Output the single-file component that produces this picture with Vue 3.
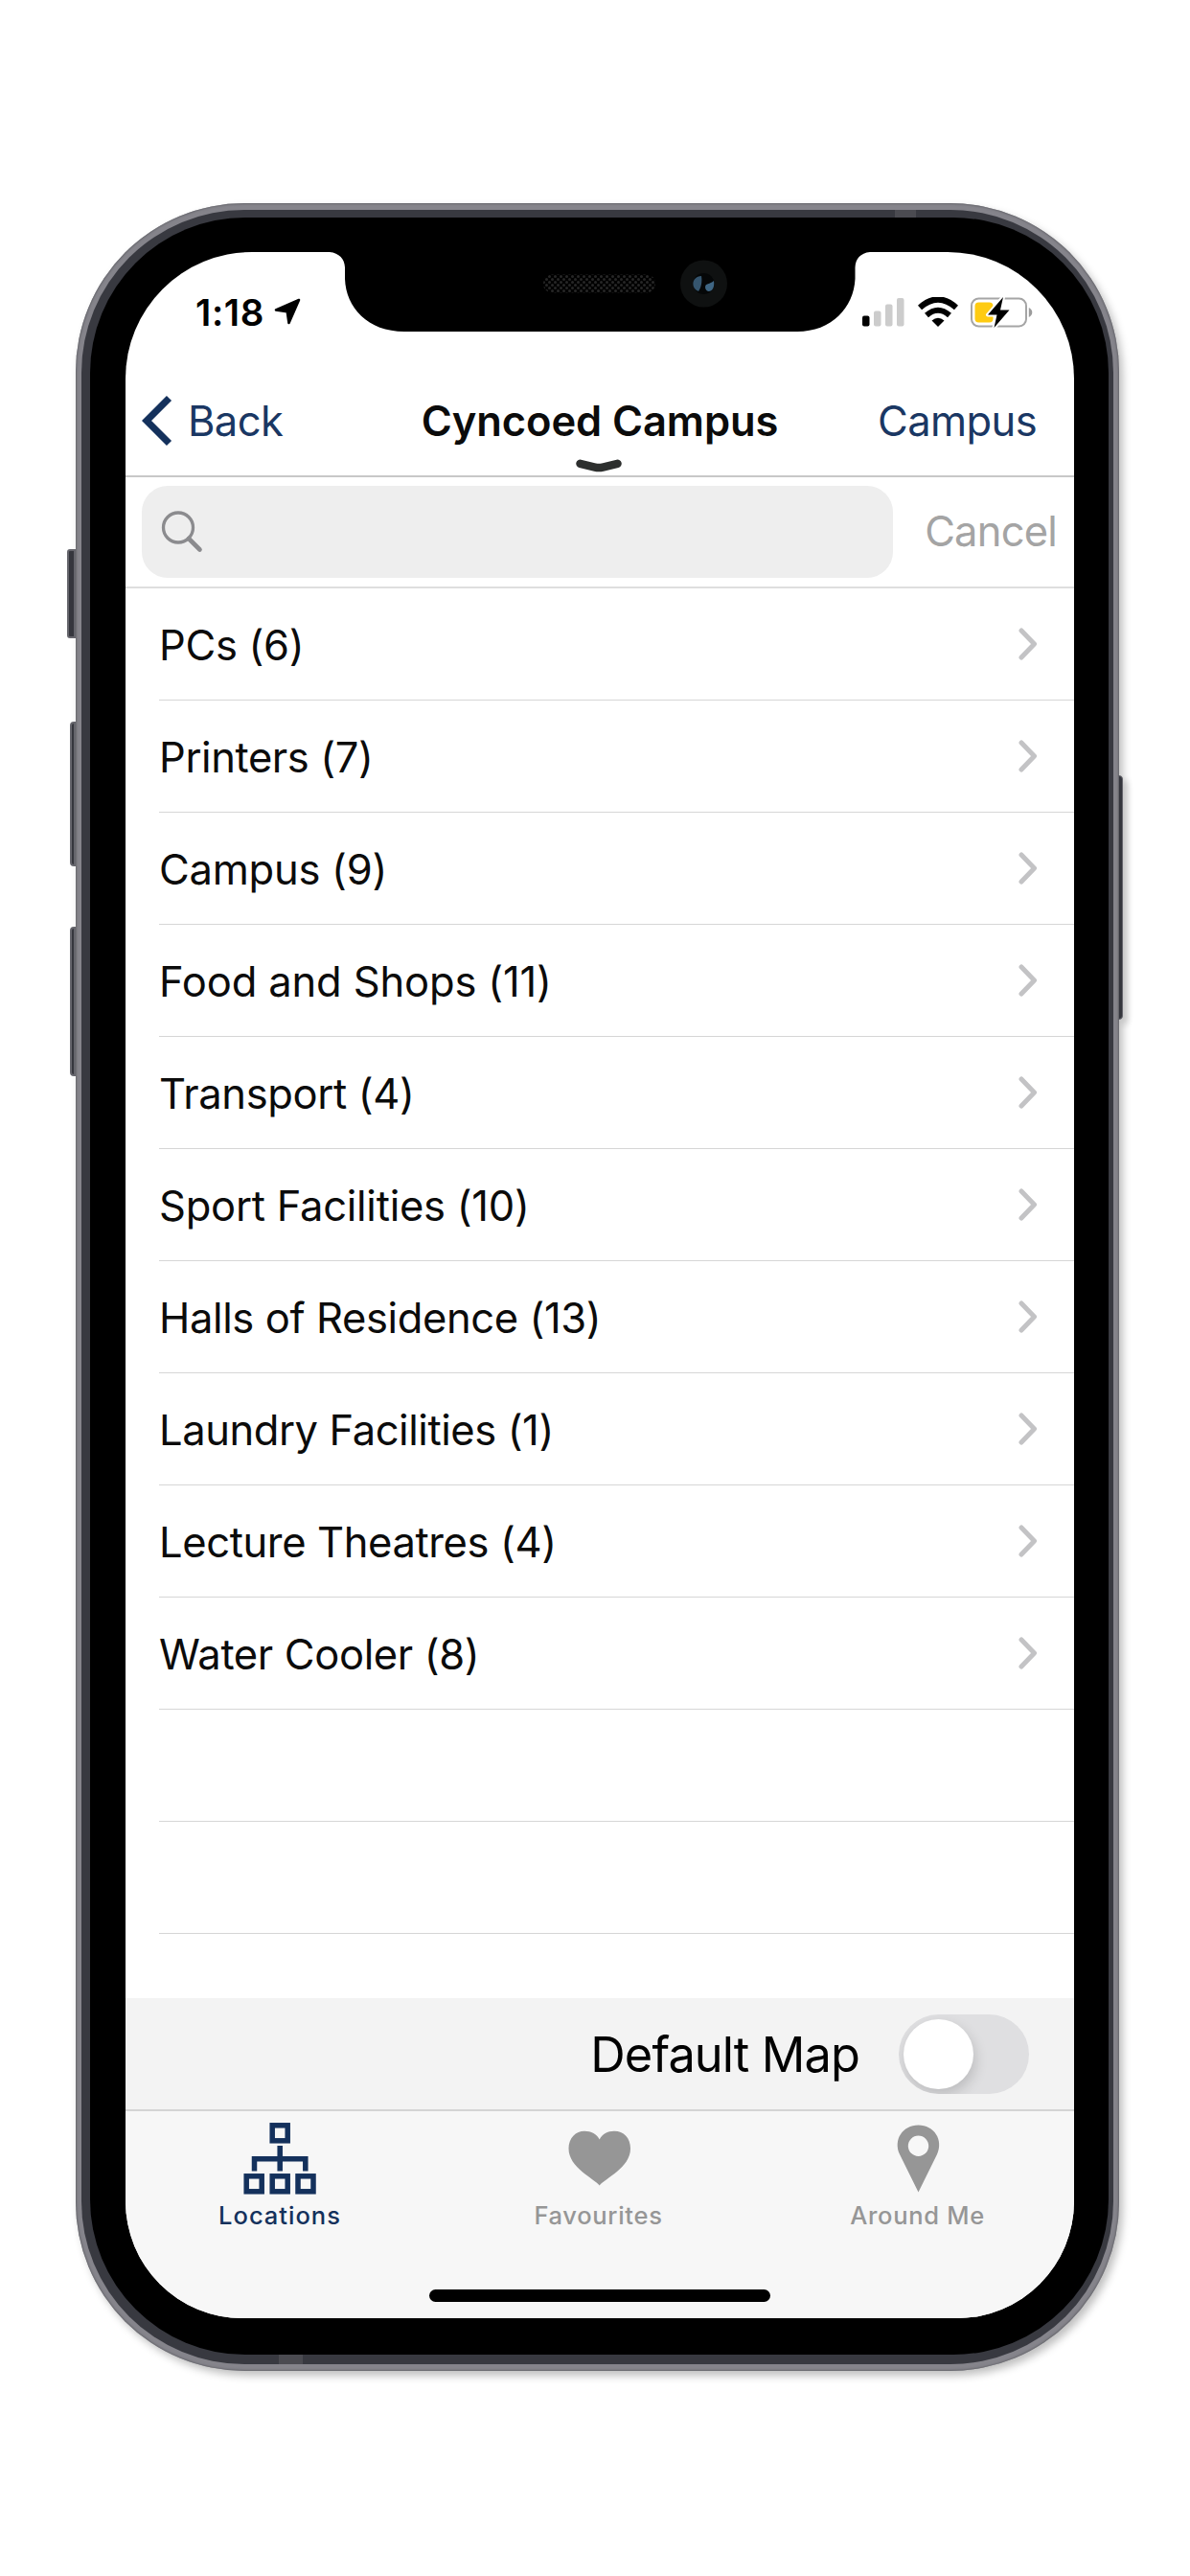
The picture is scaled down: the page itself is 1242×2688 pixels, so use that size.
<script setup>
import { ref } from 'vue';

const categories = [
  { name: 'PCs', count: 6, spacing: -0.3 },
  { name: 'Printers', count: 7, spacing: -0.4 },
  { name: 'Campus', count: 9, spacing: -0.25 },
  { name: 'Food and Shops', count: 11, spacing: -0.15 },
  { name: 'Transport', count: 4, spacing: -0.35 },
  { name: 'Sport Facilities', count: 10, spacing: -0.25 },
  { name: 'Halls of Residence', count: 13, spacing: -0.38 },
  { name: 'Laundry Facilities', count: 1, spacing: -0.42 },
  { name: 'Lecture Theatres', count: 4, spacing: -0.38 },
  { name: 'Water Cooler', count: 8, spacing: -0.35 },
];

const emptyRows = 2;

const activeTab = ref('locations');
const defaultMap = ref(false);
const query = ref('');
</script>

<template>
  <div class="page">
    <div class="phone">
      <span class="side-button mute"></span>
      <span class="side-button volume-up"></span>
      <span class="side-button volume-down"></span>
      <span class="side-button power"></span>
      <div class="rim">
        <span class="band top"></span>
        <span class="band bottom"></span>
        <div class="bezel">
          <div class="screen">
            <svg class="notch" viewBox="0 0 564 84">
              <path d="M0 0 H564 C554 1 549 7 548.5 16 V28 C547 58 524 83 488 83 H78 C40 83 17 58 16 28 V16 C15.500 7 10 1 0 0 Z" fill="#000" />
              <defs>
                <pattern id="mesh" width="6" height="6" patternUnits="userSpaceOnUse">
                  <circle cx="1.500" cy="1.500" r="1.500" fill="#262626" />
                  <circle cx="4.500" cy="4.500" r="1.500" fill="#262626" />
                </pattern>
              </defs>
              <rect x="223" y="23.500" width="117" height="19" rx="9" fill="url(#mesh)" />
              <circle cx="390.500" cy="33" r="24.500" fill="#0f1111" />
              <circle cx="390.500" cy="33" r="11" fill="#050708" />
              <path d="M388 25 C377 26 377 38 385 41 C388 37 389 30 388 25 Z" fill="#35556e" />
              <path d="M401 30 C397 34 392 32 392 37 C393 44 403 42 401 30 Z" fill="#3f6684" />
            </svg>

            <div class="status-bar">
              <span class="time">1:18</span>
              <svg class="location" viewBox="0 0 28 28">
                <path d="M26 2 L2 12.500 L13.800 14.200 L15.500 26 Z" stroke="#000" stroke-width="2.600" stroke-linejoin="round" />
              </svg>
              <div class="status-icons">
                <svg width="44" height="32" viewBox="0 0 44 32">
                  <rect x="0" y="19.500" width="7.500" height="11" rx="2" fill="#000" />
                  <rect x="12" y="14.500" width="7.500" height="16" rx="2" fill="#ccc" />
                  <rect x="24" y="7.500" width="7.500" height="23" rx="2" fill="#ccc" />
                  <rect x="36" y="1" width="7.500" height="29.500" rx="2" fill="#ccc" />
                </svg>
                <svg class="wifi" width="42" height="32" viewBox="0 0 42 32">
                  <path d="M2 11 Q21 -6 40 11" fill="none" stroke="#000" stroke-width="6.200" />
                  <path d="M9 19 Q21 8.500 33 19" fill="none" stroke="#000" stroke-width="6" />
                  <path d="M14.500 24.500 Q21 19 27.500 24.500 L21 31 Z" fill="#000" />
                </svg>
                <svg class="battery" width="65" height="34" viewBox="0 0 65 34">
                  <rect x="1" y="2.500" width="57" height="29" rx="7.500" fill="none" stroke="#a5a5a5" stroke-width="2" />
                  <path d="M60.800 12 Q64.300 14 64.300 17 Q64.300 20 60.800 22 Z" fill="#9c9c9c" />
                  <rect x="4.500" y="6.500" width="19" height="21" rx="4" fill="#fecb12" />
                  <path d="M34 1 L18 19.500 H27.500 L24.500 33 L40.500 14.500 H31 Z" fill="#000" stroke="#fff" stroke-width="4" paint-order="stroke" stroke-linejoin="round" />
                </svg>
              </div>
            </div>

            <header class="nav-bar">
              <a class="back">
                <svg viewBox="0 0 32 54">
                  <path d="M28.500 3.500 L5 27 L28.500 50.500" fill="none" stroke="#14315c" stroke-width="7.200" />
                </svg>
                <span>Back</span>
              </a>
              <h1>Cyncoed Campus</h1>
              <a class="action">Campus</a>
              <svg class="handle" viewBox="0 0 48 14">
                <path d="M4.500 4.800 L20 8.600 Q24 9.600 28 8.600 L43.500 4.800" fill="none" stroke="#2d2f2e" stroke-width="8.500" stroke-linecap="round" />
              </svg>
            </header>

            <div class="search-bar">
              <label class="field">
                <svg viewBox="0 0 44 44">
                  <circle cx="18" cy="17.500" r="15.500" fill="none" stroke="#8b8b8e" stroke-width="3.300" />
                  <path d="M29 29 L40.500 40.500" stroke="#8b8b8e" stroke-width="4.600" stroke-linecap="round" />
                </svg>
                <input v-model="query" type="text" />
              </label>
              <button class="cancel" @click="query = ''">Cancel</button>
            </div>

            <ul class="list">
              <li v-for="item in categories" :key="item.name" class="row">
                <span :style="{ letterSpacing: item.spacing + 'px' }">{{ item.name }} ({{ item.count }})</span>
                <svg viewBox="0 0 20 34">
                  <path d="M3 3 L16.500 17 L3 31" fill="none" stroke="#c3c3c5" stroke-width="5" stroke-linecap="round" stroke-linejoin="round" />
                </svg>
              </li>
              <li v-for="n in emptyRows" :key="n" class="row"></li>
            </ul>

            <div class="map-bar">
              <span>Default Map</span>
              <button class="toggle" :class="{ on: defaultMap }" @click="defaultMap = !defaultMap">
                <i></i>
              </button>
            </div>

            <nav class="tab-bar">
              <a :class="{ active: activeTab === 'locations' }" @click="activeTab = 'locations'">
                <svg viewBox="0 0 80 80">
                  <g fill="none" stroke="currentColor" stroke-width="5.500">
                    <rect x="32.200" y="6.800" width="16" height="16" />
                    <rect x="5.200" y="59.800" width="16" height="16" />
                    <rect x="32.200" y="59.800" width="16" height="16" />
                    <rect x="59" y="59.800" width="16" height="16" />
                    <path d="M40.200 28 V54.500 M13.500 54.500 V41.700 H66.800 V54.500" />
                  </g>
                </svg>
                <span>Locations</span>
              </a>
              <a :class="{ active: activeTab === 'favourites' }" @click="activeTab = 'favourites'">
                <svg viewBox="0 0 80 80">
                  <path d="M40.700 69.500 C35 62 8.500 51 8.500 31 C8.500 20 16 12.800 25 12.800 C32 12.800 38 16 40.700 21.500 C43.500 16 49 12.800 56 12.800 C66 12.800 73 20 73 31 C73 51 46.500 62 40.700 69.500 Z" fill="currentColor" />
                </svg>
                <span>Favourites</span>
              </a>
              <a :class="{ active: activeTab === 'around' }" @click="activeTab = 'around'">
                <svg viewBox="0 0 80 80">
                  <path fill-rule="evenodd" d="M40.500 76.500 L21 37 C14 22 24 6.500 40.500 6.500 C57 6.500 67 22 60 37 Z M40.500 17.500 A10.700 10.700 0 1 0 40.500 38.900 A10.700 10.700 0 1 0 40.500 17.500 Z" fill="currentColor" />
                </svg>
                <span>Around Me</span>
              </a>
            </nav>
            <div class="home-indicator"></div>
          </div>
        </div>
      </div>
    </div>
  </div>
</template>

<style>
html,
body {
  background: #fff;
}
</style>

<style scoped>
* {
  box-sizing: border-box;
}

.page {
  width: 1242px;
  height: 2688px;
  padding: 212px 0 0 79px;
  overflow: hidden;
  background: #fff;
  font-family: Inter, "Liberation Sans", sans-serif;
  color: #0b0b0b;
}

.phone {
  position: relative;
  width: 1089px;
  height: 2262px;
  padding: 7px 6px;
  border-radius: 176px;
  background: #85848b;
  box-shadow: inset 0 0 2px 1px #66666c, 4px 5px 8px rgba(0, 0, 0, 0.25);
}

.rim {
  position: relative;
  height: 100%;
  padding: 8px 5px 10px 9px;
  border-radius: 170px;
  background: #383940;
}

/* antenna bands */
.band {
  position: absolute;
  background: #4b4b51;
}

.band.top {
  top: 0;
  left: 849px;
  width: 22px;
  height: 8px;
}

.band.bottom {
  bottom: 0;
  left: 206px;
  width: 25px;
  height: 10px;
}

.bezel {
  height: 100%;
  padding: 36px 36px 38px 37px;
  border-radius: 162px;
  background: #000;
}

.side-button {
  position: absolute;
  background: #35363d;
  border: 2px solid #65656c;
}

.mute {
  left: -9px;
  top: 361px;
  width: 9px;
  height: 93px;
  border-radius: 3px 0 0 3px;
}

.volume-up,
.volume-down {
  left: -6px;
  width: 6px;
  height: 151px;
  border-radius: 4px 0 0 4px;
}

.volume-up {
  top: 541px;
}

.volume-down {
  top: 755px;
  height: 156px;
}

.power {
  right: -4px;
  top: 597px;
  width: 5px;
  height: 255px;
  border-width: 1px;
  border-radius: 0 4px 4px 0;
  box-shadow: 5px 5px 6px rgba(0, 0, 0, 0.2);
}

.screen {
  position: relative;
  display: flex;
  flex-direction: column;
  height: 100%;
  border-radius: 132px 132px 122px 122px;
  overflow: hidden;
  background: #fff;
}

.notch {
  position: absolute;
  left: 213px;
  top: 0;
  width: 564px;
  height: 84px;
}

.status-bar {
  display: flex;
  align-items: center;
  height: 119px;
  padding: 7px 43px 0 73px;
}

.time {
  font-size: 38.5px;
  font-weight: 600;
  letter-spacing: 0.6px;
  color: #000;
}

.location {
  width: 28px;
  height: 28px;
  margin: 0 0 2px 10px;
}

.status-icons {
  display: flex;
  align-items: center;
  margin-left: auto;
}

.wifi {
  margin-left: 14px;
}

.battery {
  margin-left: 13px;
}

.nav-bar {
  position: relative;
  display: flex;
  align-items: center;
  justify-content: space-between;
  height: 116px;
  padding: 0 39px 0 17px;
  border-bottom: 2px solid #c8c8c8;
  font-size: 43.5px;
  color: #1a3763;
}

.back {
  display: flex;
  align-items: center;
  letter-spacing: -0.6px;
}

.back svg {
  width: 32px;
  height: 54px;
  margin-right: 16px;
}

.nav-bar h1 {
  position: absolute;
  left: 0;
  right: 0;
  margin: 0;
  text-align: center;
  font-size: 43.5px;
  font-weight: 600;
  letter-spacing: -0.1px;
  color: #0b0b0b;
}

.action {
  letter-spacing: -0.6px;
}

.handle {
  position: absolute;
  left: 470px;
  bottom: 3px;
  width: 48px;
  height: 14px;
}

.search-bar {
  display: flex;
  align-items: center;
  justify-content: space-between;
  height: 116px;
  padding: 0 18px 0 17px;
  border-bottom: 2px solid #dedede;
}

.field {
  display: flex;
  align-items: center;
  width: 784px;
  height: 96px;
  padding: 0 20px;
  border-radius: 27px;
  background: #eee;
}

.field svg {
  width: 44px;
  height: 44px;
}

.field input {
  flex: 1;
  border: 0;
  outline: 0;
  background: none;
  font: inherit;
  font-size: 43px;
}

.cancel {
  padding: 0 0 3px;
  border: 0;
  background: none;
  font-family: inherit;
  font-size: 43.5px;
  letter-spacing: -0.8px;
  color: #a4a4a4;
}

.list {
  flex: 1;
  margin: 0;
  padding: 0 0 0 35px;
  list-style: none;
}

.row {
  display: flex;
  align-items: center;
  justify-content: space-between;
  height: 117px;
  padding-right: 38px;
  border-bottom: 1px solid #d6d6d6;
  font-size: 43.5px;
}

.row span {
  padding-top: 2px;
}

.row svg {
  width: 20px;
  height: 34px;
}

.map-bar {
  display: flex;
  align-items: center;
  justify-content: flex-end;
  gap: 41px;
  height: 116px;
  padding-right: 47px;
  background: #f3f3f3;
  font-size: 50.5px;
  letter-spacing: -0.9px;
  color: #000;
}

.toggle {
  width: 136px;
  height: 83px;
  padding: 5px;
  border: 0;
  border-radius: 42px;
  background: #dfdfe1;
  overflow: hidden;
}

.toggle i {
  display: block;
  width: 73px;
  height: 73px;
  border-radius: 50%;
  background: #fff;
  box-shadow: 2px 6px 14px rgba(0, 0, 0, 0.16);
}

.toggle.on {
  background: #34c759;
}

.toggle.on i {
  margin-left: auto;
}

.tab-bar {
  display: grid;
  grid-template-columns: 322px 343px 323px;
  height: 218px;
  padding-top: 8px;
  border-top: 2px solid #d4d4d4;
  background: #f7f7f7;
}

.tab-bar a {
  display: flex;
  flex-direction: column;
  align-items: center;
  font-size: 25.5px;
  font-weight: 500;
  line-height: 30px;
  letter-spacing: 0.7px;
  color: #969696;
}

.tab-bar a.active {
  letter-spacing: 1px;
  color: #14315c;
}

.tab-bar svg {
  width: 80px;
  height: 80px;
  margin-bottom: 6px;
}

.home-indicator {
  position: absolute;
  left: 317px;
  bottom: 17px;
  width: 356px;
  height: 13px;
  border-radius: 7px;
  background: #000;
}
</style>
